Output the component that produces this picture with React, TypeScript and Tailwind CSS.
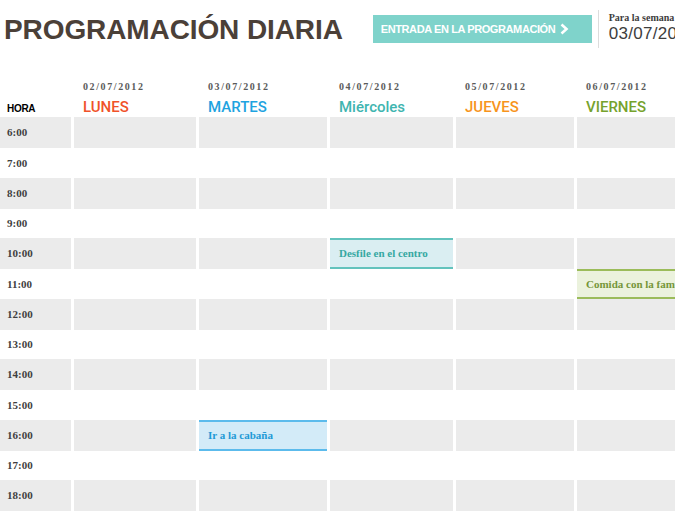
import React from 'react';

// ─── Data ───────────────────────────────────────────────────────────────────

const DAYS = [
  { date: '02/07/2012', name: 'LUNES', color: 'text-[#f0522a]' },
  { date: '03/07/2012', name: 'MARTES', color: 'text-[#1ea3e0]' },
  { date: '04/07/2012', name: 'Miércoles', color: 'text-[#3fb5b0]' },
  { date: '05/07/2012', name: 'JUEVES', color: 'text-[#f7941d]' },
  { date: '06/07/2012', name: 'VIERNES', color: 'text-[#76a22d]' },
];

const HOURS = ['6:00', '7:00', '8:00', '9:00', '10:00', '11:00', '12:00', '13:00', '14:00', '15:00', '16:00', '17:00', '18:00'];

type Ev = { text: string; cls: string };

// key: `${hourIndex}-${dayIndex}`
const EVENTS: Record<string, Ev> = {
  '4-2': { text: 'Desfile en el centro', cls: 'bg-[#daeef2] border-[#62c3bd] text-[#36a8a2]' },
  '5-4': { text: 'Comida con la familia', cls: 'bg-[#ebf2dd] border-[#9bbc5a] text-[#75963a]' },
  '10-1': { text: 'Ir a la cabaña', cls: 'bg-[#d3ebf8] border-[#5cbbec] text-[#1f9ad6]' },
};

const SERIF = "font-['Liberation_Serif',serif]";

// ─── Component ──────────────────────────────────────────────────────────────

export default function App() {
  return (
    <div className="w-[675px] h-[520px] overflow-hidden bg-white font-['Liberation_Sans',Arial,sans-serif]">
      {/* Header */}
      <div className="flex items-center h-[58px] pl-[4px]">
        <h1 className="shrink-0 text-[28px] font-bold text-[#4b4038] leading-none tracking-[-0.1px] mt-[2px] whitespace-nowrap">
          PROGRAMACIÓN DIARIA
        </h1>
        <button className="shrink-0 ml-[30px] flex items-center gap-[4px] h-[28px] w-[219px] pl-[8px] bg-[#7fd3cb] text-white text-[11px] font-bold whitespace-nowrap tracking-[-0.4px]">
          ENTRADA EN LA PROGRAMACIÓN
          <svg width="10" height="12" viewBox="0 0 10 12" className="shrink-0">
            <path d="M2.5 1.5 L7.5 6 L2.5 10.5" fill="none" stroke="white" strokeWidth="2.6" />
          </svg>
        </button>
        <div className="shrink-0 ml-[6px] self-start mt-[10px] h-[38px] w-px bg-[#dcdcdc]" />
        <div className="shrink-0 ml-[10px] flex flex-col whitespace-nowrap -mt-[3px]">
          <span className={`${SERIF} text-[10px] font-bold text-[#3c3c3c] leading-[13px]`}>Para la semana</span>
          <span className="text-[17px] text-[#3d3d3d] leading-[20px] tracking-[0.3px]">03/07/2012</span>
        </div>
      </div>

      {/* Schedule grid */}
      <div className="mt-[22px] grid grid-cols-[71px_122px_128px_123px_118px_130px] gap-x-[3px]">
        {/* Column headers */}
        <div className="flex items-end pl-[7px] pb-[1px]">
          <span className="text-[10px] font-bold text-black tracking-[-0.3px]">HORA</span>
        </div>
        {DAYS.map((d) => (
          <div key={d.date} className="flex flex-col pl-[9px] pb-[1px] whitespace-nowrap">
            <span className={`${SERIF} text-[10px] font-bold text-[#5a5a5a] tracking-[1.6px] leading-[14px]`}>{d.date}</span>
            <span className={`font-['Roboto',sans-serif] font-medium text-[15px] leading-[18px] mt-[4px] ${d.color}`}>{d.name}</span>
          </div>
        ))}

        {/* Rows */}
        {HOURS.map((h, hi) => {
          const shaded = hi % 2 === 0;
          const rowH = shaded ? 'h-[31px]' : 'h-[29.5px]';
          const bg = shaded ? 'bg-[#ebebeb]' : 'bg-white';
          return (
            <React.Fragment key={h}>
              <div className={`${rowH} ${bg} flex items-center pl-[7px]`}>
                <span className={`${SERIF} text-[11px] font-bold text-[#3f3f3f]`}>{h}</span>
              </div>
              {DAYS.map((d, di) => {
                const ev = EVENTS[`${hi}-${di}`];
                if (ev) {
                  return (
                    <div
                      key={d.date}
                      className={`${rowH} border-y-2 flex items-center pl-[9px] whitespace-nowrap overflow-hidden ${ev.cls}`}
                    >
                      <span className={`${SERIF} text-[11px] font-bold`}>{ev.text}</span>
                    </div>
                  );
                }
                return <div key={d.date} className={`${rowH} ${bg}`} />;
              })}
            </React.Fragment>
          );
        })}
      </div>
    </div>
  );
}
